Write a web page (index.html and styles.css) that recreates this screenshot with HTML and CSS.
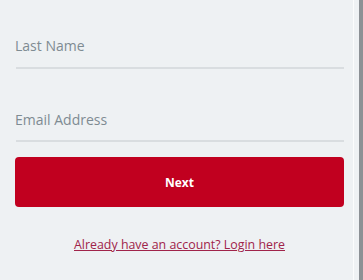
FILE: index.html
```html
<!DOCTYPE html>
<html>
<head>
<meta charset="utf-8">
<link rel="stylesheet" href="styles.css">
</head>
<body>
<div class="frame">
  <div class="content">
    <form class="form">
      <div class="field"><span class="placeholder">Last Name</span></div>
      <div class="field"><span class="placeholder">Email Address</span></div>
      <button type="button" class="btn">Next</button>
      <a class="login" href="#">Already have an account? Login here</a>
    </form>
  </div>
  <div class="edge"></div>
  <div class="scroll"></div>
</div>
</body>
</html>
```
FILE: styles.css
```css
html, body {
  margin: 0;
  padding: 0;
  height: 100%;
  background: #eef1f3;
  overflow: hidden;
}
.frame {
  display: flex;
  height: 280px;
  font-family: "Open Sans", "Noto Sans", sans-serif;
}
.content {
  flex: 1;
  padding: 0 9px 0 15px;
}
.edge {
  width: 1px;
  background: #fbfcfc;
  margin-right: 5px;
}
.scroll {
  width: 4px;
  background: #8c9195;
}
.form {
  display: flex;
  flex-direction: column;
}
.field {
  padding: 39px 0 9px 1px;
  border-bottom: 2px solid #d9dde0;
  line-height: 22px;
  margin-left: 1px;
}
.field:first-child {
  padding: 34px 0 10px 1px;
}
.placeholder {
  font-size: 14px;
  color: #7e8b92;
  margin-left: -2px;
}
.btn {
  margin-top: 15px;
  height: 50px;
  border: none;
  border-radius: 4px;
  background: #c1001f;
  color: #fff;
  font-family: inherit;
  font-weight: 700;
  font-size: 12px;
}
.login {
  margin-top: 27px;
  line-height: 22px;
  text-align: center;
  font-size: 12.4px;
  color: #a0244a;
  text-decoration: underline;
}
```
